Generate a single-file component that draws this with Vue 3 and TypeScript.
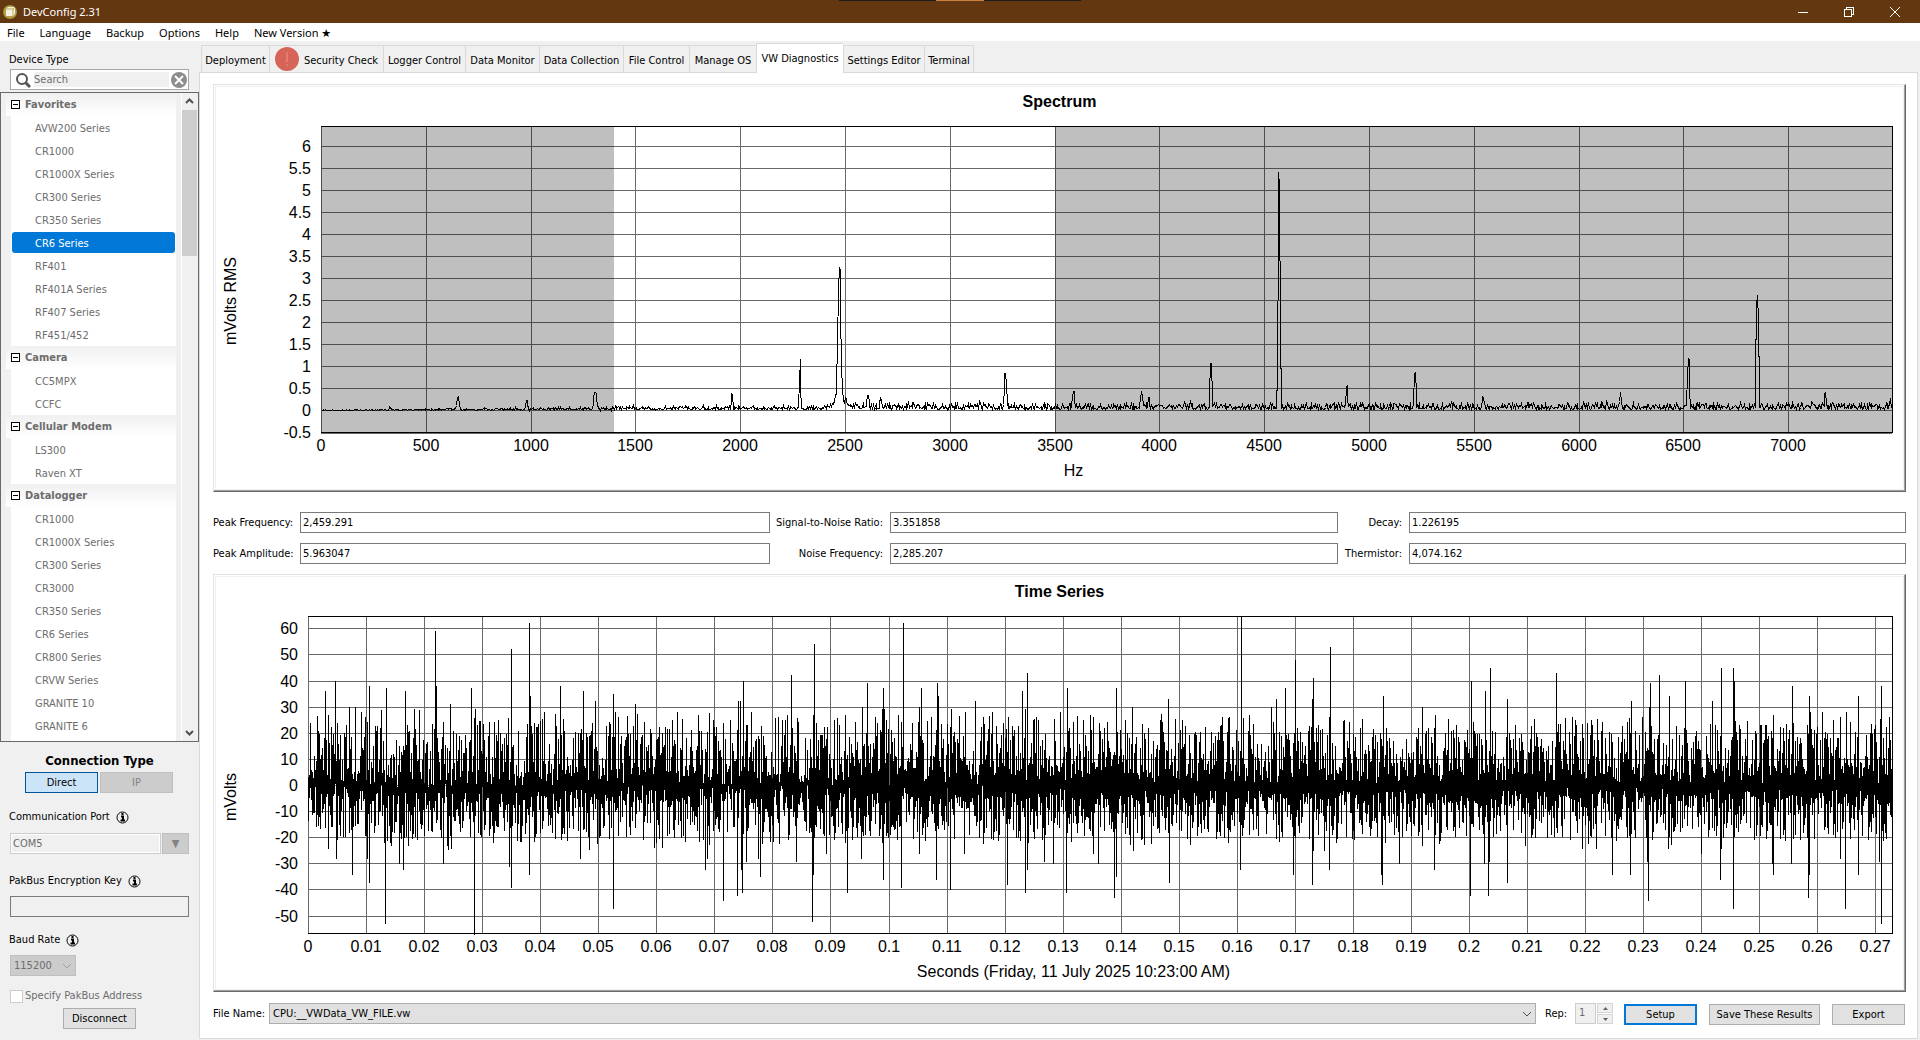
<script setup lang="ts">
import { computed, onBeforeUnmount, onMounted, ref } from 'vue'

interface Tab {
  name: string
  width: number
  alert?: boolean
}

interface Axis {
  min: number
  max: number
  step: number
  label: string
}

interface ChartSpec {
  id: string
  title: string
  height: number
  left: number
  x: Axis
  y: Axis
  yFirst: number
  shaded: [number, number][]
}

const menus = ['File', 'Language', 'Backup', 'Options', 'Help', 'New Version ★']

const tabs: Tab[] = [
  { name: 'Deployment', width: 68 },
  { name: 'Security Check', width: 114, alert: true },
  { name: 'Logger Control', width: 82 },
  { name: 'Data Monitor', width: 74 },
  { name: 'Data Collection', width: 84 },
  { name: 'File Control', width: 66 },
  { name: 'Manage OS', width: 67 },
  { name: 'VW Diagnostics', width: 87 },
  { name: 'Settings Editor', width: 81 },
  { name: 'Terminal', width: 50 },
]
const activeTab = ref('VW Diagnostics')

const deviceGroups = [
  {
    name: 'Favorites',
    devices: [
      'AVW200 Series', 'CR1000', 'CR1000X Series', 'CR300 Series', 'CR350 Series',
      'CR6 Series', 'RF401', 'RF401A Series', 'RF407 Series', 'RF451/452',
    ],
  },
  { name: 'Camera', devices: ['CC5MPX', 'CCFC'] },
  { name: 'Cellular Modem', devices: ['LS300', 'Raven XT'] },
  {
    name: 'Datalogger',
    devices: [
      'CR1000', 'CR1000X Series', 'CR300 Series', 'CR3000', 'CR350 Series',
      'CR6 Series', 'CR800 Series', 'CRVW Series', 'GRANITE 10', 'GRANITE 6',
    ],
  },
]
const selectedDevice = 'Favorites/CR6 Series'

const results = [
  { id: 'peak-frequency', label: 'Peak Frequency:', value: '2,459.291' },
  { id: 'snr', label: 'Signal-to-Noise Ratio:', value: '3.351858' },
  { id: 'decay', label: 'Decay:', value: '1.226195' },
  { id: 'peak-amplitude', label: 'Peak Amplitude:', value: '5.963047' },
  { id: 'noise-frequency', label: 'Noise Frequency:', value: '2,285.207' },
  { id: 'thermistor', label: 'Thermistor:', value: '4,074.162' },
]

const fileName = ref('CPU:__VWData_VW_FILE.vw')

/* ---------- chart geometry ---------- */

const PLOT_TOP = 41
const PLOT_BOTTOM_GAP = 59
const PLOT_RIGHT_GAP = 13

const specs: ChartSpec[] = [
  {
    id: 'spectrum',
    title: 'Spectrum',
    height: 406,
    left: 107,
    x: { min: 0, max: 7495, step: 500, label: 'Hz' },
    y: { min: -0.5, max: 6.4545, step: 0.5, label: 'mVolts RMS' },
    yFirst: -0.5,
    shaded: [[0, 1400], [3500, 7495]],
  },
  {
    id: 'time',
    title: 'Time Series',
    height: 416,
    left: 94,
    x: { min: 0, max: 0.27286, step: 0.01, label: 'Seconds (Friday, 11 July 2025 10:23:00 AM)' },
    y: { min: -56.7, max: 64.75, step: 10, label: 'mVolts' },
    yFirst: -50,
    shaded: [],
  },
]

function ticks(first: number, axis: Axis): number[] {
  const out: number[] = []
  const count = Math.floor((axis.max - first) / axis.step + 0.001)
  for (let i = 0; i <= count; i++) out.push(Number((first + i * axis.step).toFixed(2)))
  return out
}

/* ---------- signal data ---------- */

function randomSource(seed: number): () => number {
  let s = seed
  return () => {
    s = (s + 0x6d2b79f5) | 0
    let t = Math.imul(s ^ (s >>> 15), 1 | s)
    t = (t + Math.imul(t ^ (t >>> 7), 61 | t)) ^ t
    return ((t ^ (t >>> 14)) >>> 0) / 4294967296
  }
}

// Resonances: frequency in Hz, amplitude in mV RMS, half width in Hz.
const peaks: [number, number, number][] = [
  [326, 0.08, 3], [652, 0.32, 5], [980, 0.22, 4], [1307, 0.42, 8], [1960, 0.38, 3],
  [2285, 1.15, 2], [2473, 2.5, 6], [2610, 0.34, 3], [2670, 0.27, 3], [3265, 0.85, 5],
  [3590, 0.43, 5], [3915, 0.41, 3], [3950, 0.3, 3], [4246, 1.06, 3], [4571, 5.42, 4],
  [4895, 0.56, 3], [5221, 0.86, 3], [5545, 0.32, 4], [6202, 0.41, 4], [6527, 1.19, 4],
  [6855, 2.62, 4], [7180, 0.4, 3], [7490, 0.27, 3],
]

function spectrumValues(): number[] {
  const rnd = randomSource(77)
  const bins = 2048
  const out: number[] = []
  for (let i = 0; i < bins; i++) {
    const hz = (i / bins) * 7500
    const floor = hz < 1400 ? 0.01 + hz / 30000 : hz < 2400 ? 0.07 : 0.12
    let v = floor * (0.15 + 1.6 * rnd() * Math.sqrt(rnd()))
    for (const [f, amp, width] of peaks) {
      const d = Math.abs(hz - f)
      if (d < 14) v = Math.max(v, amp * Math.exp(-((Math.max(0, d - 1.9) / width) ** 2) * 0.8))
    }
    v += 0.75 / (1 + ((hz - 2473) / 12) ** 2)
    out.push(v)
  }
  return out
}

// Impulses: position along the record (0 to 1584 after removing the lead-in), millivolts.
const LEAD_IN = 308
const RECORD_LENGTH = 1584
const impulses: [number, number][] = [
  [325, 36], [335, 40], [349, 30], [355, 30], [361, 28], [369, 38], [386, 37], [405, 36],
  [414, 29], [435, 59], [436, 38], [450, 31], [471, 37], [475, 29], [511, 52], [529, 62],
  [530, 34], [560, 38], [583, 36], [595, 32], [613, 35], [635, 31], [698, 27], [738, 32],
  [740, 32], [743, 40], [778, 26], [787, 27], [791, 42], [813, 27], [814, 54], [862, 30],
  [867, 39], [882, 29], [883, 37], [884, 29], [903, 62], [919, 30], [921, 37], [937, 39],
  [938, 34], [951, 29], [965, 28], [975, 32], [983, 26], [992, 28], [1008, 26], [1022, 36],
  [1025, 29], [1027, 43], [1036, 26], [1060, 28], [1067, 37], [1093, 26], [1116, 37],
  [1125, 25], [1132, 30], [1168, 33], [1182, 25], [1222, 26], [1241, 65], [1271, 30],
  [1276, 33], [1285, 37], [1295, 48], [1312, 33], [1313, 41], [1329, 26], [1330, 53],
  [1383, 34], [1422, 30], [1435, 27], [1471, 40], [1485, 36], [1490, 45], [1507, 33],
  [1556, 43], [1575, 25], [1631, 32], [1649, 30], [1650, 39], [1659, 42], [1669, 34],
  [1685, 40], [1712, 32], [1721, 45], [1733, 45], [1734, 40], [1773, 27], [1792, 38],
  [1809, 34], [1810, 28], [1822, 28], [1840, 26], [1846, 28], [1858, 34], [1881, 38], [1889, 26],
  [336, -28], [352, -34], [367, -28], [369, -37], [385, -53], [399, -30], [403, -32],
  [443, -30], [474, -57], [509, -31], [511, -39], [529, -34], [580, -28], [613, -47],
  [705, -32], [707, -28], [723, -44], [737, -42], [741, -32], [742, -41], [746, -29],
  [758, -28], [760, -35], [796, -29], [812, -52], [813, -34], [826, -26], [847, -41],
  [861, -28], [883, -36], [901, -39], [919, -26], [936, -36], [950, -40], [964, -26],
  [1007, -38], [1025, -41], [1027, -32], [1044, -29], [1053, -30], [1066, -41], [1093, -26],
  [1098, -30], [1114, -43], [1116, -35], [1133, -25], [1169, -37], [1228, -22], [1240, -32],
  [1293, -34], [1312, -38], [1313, -25], [1324, -25], [1329, -32], [1381, -34], [1382, -38],
  [1399, -30], [1422, -23], [1434, -32], [1470, -42], [1484, -30], [1488, -42], [1489, -29],
  [1507, -37], [1525, -23], [1582, -24], [1596, -24], [1612, -34], [1630, -34], [1647, -29],
  [1648, -44], [1668, -24], [1701, -26], [1720, -36], [1721, -24], [1733, -47], [1772, -30],
  [1773, -34], [1791, -30], [1808, -43], [1809, -34], [1840, -28], [1845, -47], [1858, -34],
  [1879, -29], [1881, -53],
]

// Lowest and highest reading in each step of the record.
function timeColumns(): [number, number][] {
  const rnd = randomSource(2459)
  const out: [number, number][] = []
  for (let c = 0; c < RECORD_LENGTH; c++) {
    const progress = Math.min(1, c / 900)
    const spread = 7 - 3 * progress
    const hi = 1 + progress + spread * (rnd() - 0.4) + (25 - 2 * progress) * rnd() ** 1.4
    const lo = -1 - progress - spread * (rnd() - 0.4) - (21 - 2 * progress) * rnd() ** 1.3
    out.push([Math.min(lo, hi - 6), hi])
  }
  for (const [position, mv] of impulses) {
    const column = out[position - LEAD_IN]
    if (!column) continue
    if (mv > 0) column[1] = mv
    else column[0] = mv
  }
  return out
}

const spectrumData = spectrumValues()
const timeData = timeColumns()

/* ---------- reactive layout ---------- */

const frameWidth = ref(1691)
const workspace = ref<HTMLElement | null>(null)
let observer: ResizeObserver | undefined

function measure() {
  const frame = workspace.value?.querySelector('.chart')
  if (frame) frameWidth.value = frame.clientWidth
}

onMounted(() => {
  measure()
  observer = new ResizeObserver(measure)
  if (workspace.value) observer.observe(workspace.value)
})
onBeforeUnmount(() => observer?.disconnect())

const charts = computed(() =>
  specs.map((s) => {
    const right = frameWidth.value - PLOT_RIGHT_GAP
    const bottom = s.height - PLOT_BOTTOM_GAP + (s.id === 'time' ? 1 : 0)
    const sx = (v: number) => Math.round(s.left + ((v - s.x.min) / (s.x.max - s.x.min)) * (right - s.left))
    const sy = (v: number) =>
      Math.round(bottom - ((Math.min(v, s.y.max) - s.y.min) / (s.y.max - s.y.min)) * (bottom - PLOT_TOP))
    let trace = ''
    if (s.id === 'spectrum') {
      trace = spectrumData
        .map((v, i) => `${i ? 'L' : 'M'}${sx((i / spectrumData.length) * 7495) + 0.5} ${sy(v) + 0.5}`)
        .join('')
    } else {
      trace = timeData
        .map(([lo, hi], i) => `M${sx((i / timeData.length) * s.x.max) + 0.5} ${sy(hi)}V${sy(lo) + 1}`)
        .join('')
    }
    return {
      ...s,
      right,
      bottom,
      middle: Math.round((PLOT_TOP + bottom) / 2) + 22,
      trace,
      xTicks: ticks(0, s.x).map((v) => ({ text: String(v), pos: sx(v) })),
      yTicks: ticks(s.yFirst, s.y).map((v) => ({ text: String(v), pos: sy(v) })),
      bands: s.shaded.map(([a, b]) => ({ x: sx(a), width: sx(b) - sx(a) })),
    }
  }),
)
</script>

<template>
  <div class="window">
    <header class="titlebar">
      <svg class="app-icon" viewBox="0 0 16 16" aria-hidden="true">
        <circle cx="8" cy="8" r="7" fill="#a8923a" />
        <circle cx="8" cy="8" r="6" fill="#b5a04a" />
        <path d="M4 5l2-2h7v7l-2 2H4z" fill="#f6f1dc" />
        <path d="M4 5h7v7M11 5l2-2" fill="none" stroke="#b9a868" />
      </svg>
      <span class="app-title">DevConfig 2.31</span>
      <div class="window-buttons">
        <button type="button" aria-label="Minimize">
          <svg viewBox="0 0 12 12"><path d="M1 6.5h10" /></svg>
        </button>
        <button type="button" aria-label="Restore">
          <svg viewBox="0 0 12 12"><path d="M1.500 3.500h7v7h-7zM3.500 3.500v-2h7v7h-2" /></svg>
        </button>
        <button type="button" aria-label="Close">
          <svg class="smooth" viewBox="0 0 12 12"><path d="M1 1l10 10M11 1L1 11" /></svg>
        </button>
      </div>
    </header>

    <nav class="menubar">
      <button v-for="m in menus" :key="m" type="button">{{ m }}</button>
    </nav>

    <div class="body">
      <aside class="sidebar">
        <label class="caption first" for="device-search">Device Type</label>
        <div class="search">
          <svg class="lens" viewBox="0 0 16 16" aria-hidden="true">
            <circle cx="7" cy="7" r="5" fill="none" stroke="#555" stroke-width="2" />
            <path d="M10.500 10.500L15 15" stroke="#555" stroke-width="3" />
          </svg>
          <input id="device-search" type="text" placeholder="Search" />
          <button type="button" aria-label="Clear search">
            <svg viewBox="0 0 16 16">
              <circle cx="8" cy="8" r="8" fill="#8c8c8c" />
              <path d="M4 4l8 8M12 4l-8 8" stroke="#fff" stroke-width="2" />
            </svg>
          </button>
        </div>

        <div class="tree">
          <div class="tree-items">
            <section v-for="g in deviceGroups" :key="g.name">
              <h3><span class="expander" />{{ g.name }}</h3>
              <ul>
                <li
                  v-for="d in g.devices"
                  :key="d"
                  :class="{ selected: `${g.name}/${d}` === selectedDevice }"
                >
                  <span>{{ d }}</span>
                </li>
              </ul>
            </section>
          </div>
          <div class="scrollbar">
            <svg viewBox="0 0 15 17" aria-hidden="true"><path d="M4 10l3.500-3.500L11 10" /></svg>
            <div class="thumb" />
            <svg class="down" viewBox="0 0 15 17" aria-hidden="true"><path d="M4 7l3.500 3.500L11 7" /></svg>
          </div>
        </div>

        <h2>Connection Type</h2>
        <div class="connection">
          <button type="button" class="btn chosen">Direct</button>
          <button type="button" class="btn" disabled>IP</button>
        </div>

        <div class="caption port">
          <label for="port">Communication Port</label>
          <svg class="info" viewBox="0 0 13 13" aria-hidden="true">
            <circle cx="6.500" cy="6.500" r="5.500" />
            <path d="M5 5.500h2v4M4.500 9.500h4.500M5.500 3h2" />
          </svg>
        </div>
        <div class="port-row">
          <input id="port" type="text" value="COM5" disabled />
          <button type="button" class="btn" disabled aria-label="Choose port">▼</button>
        </div>

        <div class="caption key">
          <label for="key">PakBus Encryption Key</label>
          <svg class="info" viewBox="0 0 13 13" aria-hidden="true">
            <circle cx="6.500" cy="6.500" r="5.500" />
            <path d="M5 5.500h2v4M4.500 9.500h4.500M5.500 3h2" />
          </svg>
        </div>
        <input id="key" class="key-input" type="text" />

        <div class="caption baud">
          <label for="baud">Baud Rate</label>
          <svg class="info" viewBox="0 0 13 13" aria-hidden="true">
            <circle cx="6.500" cy="6.500" r="5.500" />
            <path d="M5 5.500h2v4M4.500 9.500h4.500M5.500 3h2" />
          </svg>
        </div>
        <div class="select baud-select">
          <select id="baud" disabled><option>115200</option></select>
          <svg viewBox="0 0 10 6" aria-hidden="true"><path d="M1 1l4 4 4-4" /></svg>
        </div>

        <label class="check"><input type="checkbox" disabled />Specify PakBus Address</label>
        <button type="button" class="btn disconnect">Disconnect</button>
      </aside>

      <main class="content">
        <div class="tabs" role="tablist">
          <button
            v-for="t in tabs"
            :key="t.name"
            type="button"
            role="tab"
            :aria-selected="t.name === activeTab"
            :class="{ active: t.name === activeTab }"
            :style="{ width: t.width + 'px' }"
            @click="activeTab = t.name"
          >
            <svg v-if="t.alert" viewBox="0 0 24 24" aria-hidden="true">
              <circle cx="12" cy="12" r="12" fill="#d66458" />
              <path d="M12 5v10M12 17v2" stroke="#f0938a" stroke-width="1" />
            </svg>
            {{ t.name }}
          </button>
        </div>

        <div ref="workspace" class="panel">
          <template v-for="c in charts" :key="c.id">
            <section class="chart">
              <svg :height="c.height" width="100%" role="img" :aria-label="c.title">
                <g class="grid">
                  <path v-for="t in c.yTicks" :key="t.text" :d="`M${c.left} ${t.pos + 0.5}H${c.right}`" />
                  <path v-for="t in c.xTicks" :key="t.text" :d="`M${t.pos + 0.5} ${PLOT_TOP}V${c.bottom}`" />
                  <path v-if="c.bands.length" :d="`M${c.left} ${c.bottom + 1.5}H${c.right}`" />
                </g>
                <rect
                  v-for="b in c.bands"
                  :key="b.x"
                  class="band"
                  :x="b.x"
                  :y="PLOT_TOP"
                  :width="b.width"
                  :height="c.bottom - PLOT_TOP"
                />
                <path
                  class="edge"
                  :d="`M${c.left} ${PLOT_TOP + 0.5}H${c.right + 0.5}V${c.bottom + 0.5}H${c.left}`"
                />
                <path class="trace" :d="c.trace" />
                <text class="title" :x="frameWidth / 2" y="22">{{ c.title }}</text>
                <text
                  v-for="t in c.yTicks"
                  :key="t.text"
                  class="y-tick"
                  :x="c.left - 10"
                  :y="t.pos + 6"
                >{{ t.text }}</text>
                <text
                  v-for="t in c.xTicks"
                  :key="t.text"
                  class="centered"
                  :x="t.pos"
                  :y="c.bottom + 19"
                >{{ t.text }}</text>
                <text class="centered" :x="frameWidth / 2 + 14" :y="c.bottom + 44">{{ c.x.label }}</text>
                <text class="centered" :transform="`translate(22 ${c.middle}) rotate(-90)`">{{ c.y.label }}</text>
              </svg>
            </section>

            <div v-if="c.id === 'spectrum'" class="results">
              <template v-for="r in results" :key="r.id">
                <label :for="r.id">{{ r.label }}</label>
                <input :id="r.id" type="text" :value="r.value" readonly />
              </template>
            </div>
          </template>

          <div class="footer">
            <label for="file">File Name:</label>
            <div class="select file-select">
              <select id="file" v-model="fileName"><option>CPU:__VWData_VW_FILE.vw</option></select>
              <svg viewBox="0 0 10 6" aria-hidden="true"><path d="M1 1l4 4 4-4" /></svg>
            </div>
            <label class="rep-label" for="rep">Rep:</label>
            <div class="spin">
              <input id="rep" type="number" value="1" disabled />
              <div class="spin-buttons">
                <button type="button" disabled aria-label="Increase">
                  <svg viewBox="0 0 5 3"><path d="M0 3h5L2.500 0z" /></svg>
                </button>
                <button type="button" disabled aria-label="Decrease">
                  <svg viewBox="0 0 5 3"><path d="M0 0h5L2.500 3z" /></svg>
                </button>
              </div>
            </div>
            <button type="button" class="btn primary">Setup</button>
            <button type="button" class="btn wide">Save These Results</button>
            <button type="button" class="btn">Export</button>
          </div>
        </div>
      </main>
    </div>
  </div>
</template>

<style>
body {
  background: #f0f0f0;
}
</style>

<style scoped>
.window,
.window * {
  box-sizing: border-box;
}

.window {
  display: flex;
  flex-direction: column;
  min-height: 100vh;
  background: #f0f0f0;
  color: #000;
  font: 11px/16px 'DejaVu Sans Condensed', 'DejaVu Sans', sans-serif;
}

button,
input,
select {
  margin: 0;
  padding: 0;
  border: 0;
  border-radius: 0;
  background: none;
  color: inherit;
  font: inherit;
}

/* title bar and menu */
.titlebar {
  display: flex;
  align-items: center;
  height: 23px;
  padding: 0 2px;
  background:
    linear-gradient(#c9823f, #c9823f) 50% 0 / 48px 1px no-repeat,
    linear-gradient(#1c1c1c, #1c1c1c) 50% 0 / 242px 1px no-repeat,
    #633710;
  color: #fff;
  font: 11px/16px 'Noto Sans', sans-serif;
}

.app-icon {
  width: 16px;
  height: 16px;
}

.app-title {
  flex: 1;
  margin-left: 5px;
}

.window-buttons {
  display: flex;
}

.window-buttons button {
  display: flex;
  align-items: center;
  justify-content: center;
  width: 46px;
  height: 22px;
}

.window-buttons svg {
  width: 12px;
  height: 12px;
  fill: none;
  stroke: #fff;
  shape-rendering: crispEdges;
}

.window-buttons .smooth {
  shape-rendering: auto;
}

.menubar {
  display: flex;
  gap: 15px;
  height: 18px;
  padding-left: 7px;
  background: #fff;
  font: 11px/20px 'Noto Sans', 'DejaVu Sans', sans-serif;
}

.menubar button {
  height: 20px;
}

.body {
  display: flex;
  flex: 1;
}

/* sidebar */
.sidebar {
  display: flex;
  flex-direction: column;
  width: 199px;
  flex: none;
}

.caption {
  display: flex;
  align-items: center;
  gap: 6px;
  height: 16px;
  padding-left: 9px;
}

.caption.first {
  margin-top: 11px;
  line-height: 18px;
}

.search {
  display: flex;
  align-items: center;
  height: 21px;
  margin: 1px 10px 0;
  padding: 0 1px 0 4px;
  border: 1px solid #a8a8a8;
  background: #fff;
}

.search .lens {
  width: 16px;
  height: 16px;
}

.search input {
  flex: 1;
  width: 0;
  height: 15px;
  margin: 0 2px 0 3px;
  background: #f0f0f0;
}

.search input::placeholder {
  color: #6d6d6d;
  opacity: 1;
}

.search button,
.search button svg {
  display: block;
  width: 16px;
  height: 16px;
}

.tree {
  display: flex;
  margin-top: 2px;
  border: 1px solid #696969;
}

.tree-items {
  flex: 1;
  padding: 0 5px 4px 5px;
  color: #6d6d6d;
  background: linear-gradient(#fff, #fff) 10px 100% / 165px 4px no-repeat;
}

.tree h3 {
  display: flex;
  align-items: center;
  height: 23px;
  margin: 0;
  padding-left: 5px;
  background: linear-gradient(#f0f0f0, #fff);
  font-size: 11px;
  font-weight: bold;
}

.expander {
  width: 9px;
  height: 9px;
  margin-right: 5px;
  border: 1px solid #000;
  background: linear-gradient(#000, #000) center / 5px 1px no-repeat, #fff;
}

.tree ul {
  margin: 0 0 0 5px;
  padding: 0;
  list-style: none;
  background: #fff;
}

.tree li {
  height: 23px;
  padding: 1px;
}

.tree li span {
  display: block;
  height: 21px;
  padding-left: 23px;
  border-radius: 3px;
  line-height: 23px;
}

.tree .selected span {
  background: #0078d7;
  color: #fff;
}

.scrollbar {
  display: flex;
  flex-direction: column;
  width: 17px;
  padding-right: 1px;
  border-left: 1px solid #fff;
}

.scrollbar svg {
  width: 15px;
  height: 17px;
  fill: none;
  stroke: #505050;
  stroke-width: 2;
}

.scrollbar .thumb {
  height: 146px;
  background: #cdcdcd;
}

.scrollbar .down {
  margin-top: auto;
}

h2 {
  margin: 11px 0 0;
  font-size: 13px;
  line-height: 16px;
  text-align: center;
}

.btn {
  width: 73px;
  height: 21px;
  border: 1px solid #adadad;
  background: #e1e1e1;
  white-space: nowrap;
}

.btn:disabled {
  border-color: #bfbfbf;
  background: #ccc;
  color: #838383;
}

.btn.chosen {
  border-color: #005499;
  background: #cce4f7;
}

.connection {
  display: flex;
  gap: 2px;
  margin: 3px 0 0 25px;
}

.caption.port {
  margin-top: 16px;
}

.info {
  width: 13px;
  height: 13px;
  fill: none;
  stroke: #000;
}

.info path {
  stroke-width: 2;
}

.port-row {
  display: flex;
  gap: 1px;
  margin: 8px 10px 0;
}

.port-row input {
  flex: 1;
  width: 0;
  height: 21px;
  padding-left: 2px;
  border: 1px solid #ccc;
  box-shadow: inset 0 0 0 1px #fff;
  color: #6d6d6d;
}

.port-row .btn {
  width: 27px;
}

.caption.key {
  margin-top: 19px;
}

.key-input {
  height: 21px;
  margin: 7px 10px 0;
  border: 1px solid #7a7a7a;
}

.caption.baud {
  margin-top: 15px;
}

.select {
  position: relative;
  display: flex;
}

.select select {
  width: 100%;
  height: 21px;
  padding-left: 3px;
  border: 1px solid #adadad;
  background: #e1e1e1;
  appearance: none;
}

.select svg {
  position: absolute;
  top: 8px;
  right: 4px;
  width: 10px;
  height: 6px;
  fill: none;
  stroke: #505050;
  pointer-events: none;
}

.baud-select {
  width: 66px;
  margin: 7px 0 0 10px;
}

.select select:disabled {
  border-color: #bfbfbf;
  background: #ccc;
  color: #6d6d6d;
  opacity: 1;
}

.select select:disabled + svg {
  stroke: #a0a0a0;
}

.check {
  display: flex;
  align-items: center;
  gap: 2px;
  height: 16px;
  margin: 12px 0 0 10px;
  color: #6d6d6d;
}

.check input {
  width: 13px;
  height: 13px;
  border: 1px solid #ccc;
  background: #fff;
  appearance: none;
}

.disconnect {
  align-self: center;
  margin-top: 4px;
}

/* tabs */
.content {
  display: flex;
  flex: 1;
  flex-direction: column;
  min-width: 0;
  padding: 0 2px 1px 0;
}

.tabs {
  display: flex;
  align-items: flex-end;
  height: 31px;
  padding-left: 2px;
}

.tabs button {
  display: flex;
  align-items: center;
  justify-content: center;
  gap: 5px;
  height: 27px;
  padding-top: 4px;
  border: solid #d9d9d9;
  border-width: 1px 0 0 1px;
  white-space: nowrap;
}

.tabs button:last-child {
  border-right-width: 1px;
}

.tabs svg {
  width: 24px;
  height: 24px;
  margin-top: -4px;
}

.tabs .active {
  position: relative;
  height: 30px;
  margin-bottom: -1px;
  padding: 1px 0 0;
  background: #fff;
}

/* panel */
.panel {
  flex: 1;
  padding: 11px 11px 13px 13px;
  border: 1px solid #d9d9d9;
  background: #fff;
}

.chart {
  overflow: hidden;
  border: 1px solid;
  border-color: #e3e3e3 #696969 #696969 #e3e3e3;
  box-shadow: inset -1px -1px #a0a0a0, inset 1px 1px #fff, inset 0 0 0 2px #f0f0f0;
}

.chart svg {
  display: block;
  font: 16px 'Liberation Sans', Arial, sans-serif;
}

.band {
  fill: rgba(0, 0, 0, 0.25);
}

.grid,
.edge,
.trace {
  fill: none;
  shape-rendering: crispEdges;
}

.grid {
  stroke: #696969;
}

.edge,
.trace {
  stroke: #000;
}

.title {
  font-weight: bold;
  text-anchor: middle;
}

.centered {
  text-anchor: middle;
}

.y-tick {
  text-anchor: end;
}

.results {
  display: grid;
  grid-template-columns: 87px minmax(0, 470fr) 120px minmax(0, 448fr) 71px minmax(0, 497fr);
  gap: 10px 0;
  margin: 20px 0 10px;
}

.results label {
  height: 21px;
  padding-right: 7px;
  line-height: 22px;
  text-align: right;
  white-space: nowrap;
}

.results input {
  height: 21px;
  padding-left: 2px;
  border: 1px solid #7a7a7a;
}

.footer {
  display: flex;
  align-items: flex-start;
  height: 22px;
  margin-top: 11px;
  padding-right: 1px;
}

.footer label {
  width: 56px;
  line-height: 22px;
}

.file-select {
  flex: 1;
}

.footer .rep-label {
  width: 30px;
  margin-left: 9px;
}

.spin {
  display: flex;
  gap: 1px;
  width: 38px;
  height: 21px;
  margin-right: 11px;
}

.spin input {
  width: 21px;
  padding: 0 0 2px 3px;
  border: 1px solid #ccc;
  background: #f0f0f0;
  color: #6d6d6d;
  appearance: textfield;
}

.spin input::-webkit-inner-spin-button {
  display: none;
}

.spin-buttons {
  display: flex;
  flex: 1;
  flex-direction: column;
  gap: 1px;
}

.spin-buttons button {
  display: flex;
  align-items: center;
  justify-content: center;
  height: 10px;
  border: 1px solid #d5d5d5;
  background: #f0f0f0;
}

.spin-buttons svg {
  width: 5px;
  height: 3px;
  fill: #606060;
}

.footer .btn {
  margin-top: 1px;
}

.footer .primary {
  border: 2px solid #0078d7;
}

.footer .wide {
  width: 111px;
  margin: 1px 12px 0;
}
</style>
